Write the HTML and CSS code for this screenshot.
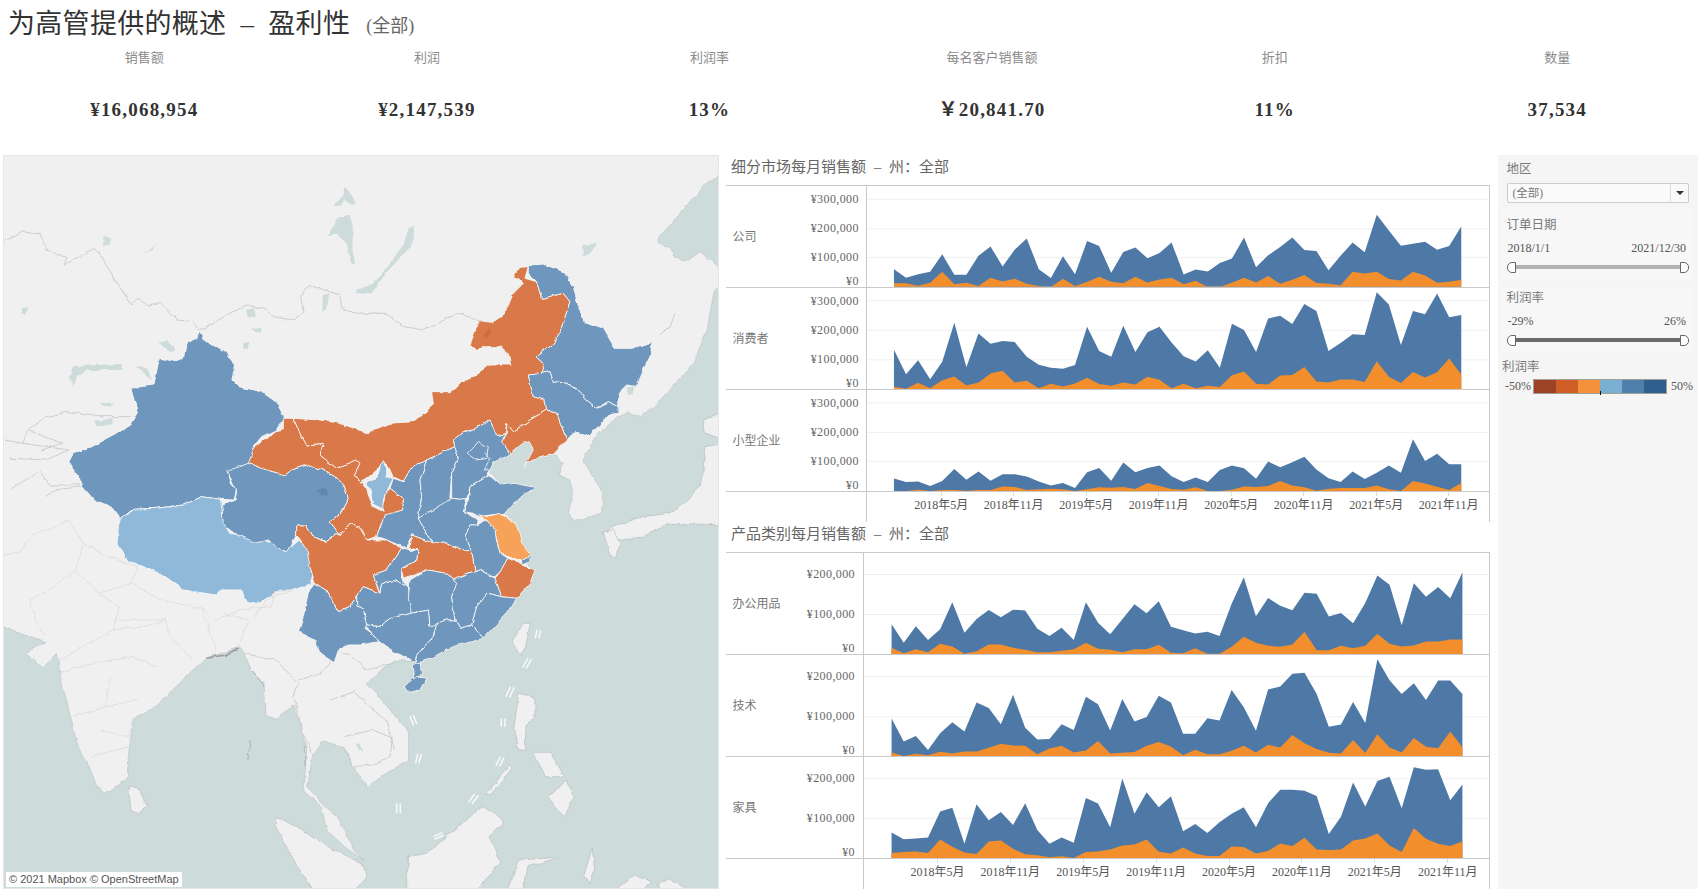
FILE: index.html
```html
<!DOCTYPE html>
<html lang="zh-CN">
<head>
<meta charset="utf-8">
<title>为高管提供的概述 - 盈利性</title>
<link rel="stylesheet" href="styles.css">
</head>
<body>
<div class="page">
  <header class="title-bar"><h1 class="title">为高管提供的概述 – 盈利性<span class="title-sub">(全部)</span></h1></header>
  <section class="kpis">
    <div class="kpi"><div class="kpi-label">销售额</div><div class="kpi-value">¥16,068,954</div></div>
    <div class="kpi"><div class="kpi-label">利润</div><div class="kpi-value">¥2,147,539</div></div>
    <div class="kpi"><div class="kpi-label">利润率</div><div class="kpi-value">13%</div></div>
    <div class="kpi"><div class="kpi-label">每名客户销售额</div><div class="kpi-value">￥20,841.70</div></div>
    <div class="kpi"><div class="kpi-label">折扣</div><div class="kpi-value">11%</div></div>
    <div class="kpi"><div class="kpi-label">数量</div><div class="kpi-value">37,534</div></div>
  </section>
  <main class="main">
    <div class="map">
      <svg class="map-svg" viewBox="4 156 714 732" preserveAspectRatio="none">
        <defs>
          <filter id="rough" filterUnits="userSpaceOnUse" x="0" y="150" width="726" height="746" color-interpolation-filters="sRGB">
            <feTurbulence type="fractalNoise" baseFrequency=".1" numOctaves="3" seed="7" result="noise"/>
            <feDisplacementMap in="SourceGraphic" in2="noise" scale="4" xChannelSelector="R" yChannelSelector="G"/>
          </filter>
        </defs>
        <g filter="url(#rough)">
        <g transform="translate(0 150) scale(.4591 .3333)">
          <polygon class="sea" points="1580,60 1540,100 1500,160 1470,210 1435,262 1432,280 1462,295 1468,325 1500,330 1525,305 1566,352 1580,352"/>
          <polygon class="sea" points="1580,400 1556,420 1540,540 1510,640 1459,720 1423,770 1394,800 1365,785 1343,800 1299,860 1270,930 1314,1030 1310,1090 1285,1100 1249,1115 1238,1090 1249,1030 1241,990 1216,975 1227,940 1209,915 1176,920 1147,940 1140,955 1161,900 1154,875 1136,880 1111,910 1074,940 1067,960 1093,1005 1118,1000 1165,1012 1118,1060 1100,1090 1121,1120 1140,1180 1154,1210 1143,1235 1165,1260 1154,1300 1125,1345 1103,1390 1053,1465 987,1490 915,1540 904,1560 900,1535 860,1530 830,1560 800,1600 850,1680 890,1750 890,1830 830,1880 800,1915 770,1850 750,1790 720,1780 700,1775 680,1820 670,1910 700,1960 735,2000 770,2100 790,2130 750,2090 712,2040 700,1970 662,1925 668,1800 655,1730 640,1665 605,1705 580,1700 575,1600 545,1560 525,1490 450,1525 420,1560 340,1670 290,1710 280,1810 280,1880 240,1925 220,1925 170,1790 130,1570 125,1510 95,1555 55,1510 100,1475 45,1450 10,1430 0,1430 0,2240 1580,2240"/>
          <polygon class="land" points="1530,810 1580,785 1580,870 1535,850"/>
          <polygon class="land" points="1345,1125 1400,1100 1460,1090 1500,1050 1530,990 1535,890 1580,880 1580,1125 1455,1120 1430,1140 1395,1165 1345,1170 1310,1150"/>
          <polygon class="land" points="1314,1145 1336,1140 1350,1180 1343,1225 1328,1215"/>
          <polygon class="lake" points="905,228 895,290 840,370 810,430 775,430 778,420 815,400 850,340 880,280 890,235"/>
          <polygon class="lake" points="750,115 770,140 775,165 750,150 745,170 725,170 745,140"/>
          <polygon class="lake" points="735,200 762,195 770,250 765,290 775,345 765,340 755,280 735,255 715,255 730,225"/>
          <polygon class="lake" points="150,680 160,648 265,642 265,660 190,660 165,680 160,712"/>
          <polygon class="lake" points="295,645 322,655 330,690 310,665"/>
          <polygon class="lake" points="345,580 365,570 385,600 370,605"/>
          <polygon class="lake" points="205,815 245,805 245,822 210,828"/>
          <polygon class="lake" points="220,758 245,760 240,768 225,768"/>
          <polygon class="lake" points="535,480 555,475 557,500 540,505"/>
          <polygon class="lake" points="703,435 717,430 712,475 702,485"/>
          <polygon class="lake" points="548,532 570,535 568,548 555,545"/>
          <polygon class="lake" points="530,580 543,575 540,598 530,600"/>
          <polygon class="lake" points="225,262 242,265 238,288 225,285"/>
          <polygon class="lake" points="310,315 350,275 330,300"/>
          <polygon class="lake" points="1268,285 1302,280 1285,310 1270,325"/>
          <polygon class="lake" points="1365,712 1382,708 1378,735 1368,732"/>
          <polygon class="lake" points="48,475 62,472 55,495 47,492"/>
          <polyline class="border" points="8,275 50,245 90,255 100,300 145,320 140,345 205,295 220,320 285,465 300,445 320,465 350,458 385,510 420,515 432,540 445,535 500,490 540,465 580,480 590,500 640,510 660,485 655,440 675,405 740,435 745,480 790,490 840,490 880,530 920,540 1000,490 1050,515"/>
          <polyline class="border" points="8,870 50,880 60,840 100,800 150,785 210,800 285,800"/>
          <polyline class="border" points="20,925 100,930 150,900 50,880"/>
          <polyline class="border" points="25,1015 85,965 110,1005 175,1005"/>
          <polyline class="border" points="100,1040 120,1020 175,1010"/>
          <polyline class="border" points="60,840 135,880 90,900"/>
          <polyline class="border" points="1470,490 1460,530 1440,558"/>
          <polygon class="blue" points="432,543 445,570 470,590 495,605 510,650 505,690 520,710 570,725 600,755 622,805 612,820 600,840 570,860 555,885 545,940 495,968 505,1000 515,1015 510,1050 480,1048 440,1040 400,1065 340,1075 290,1078 262,1108 245,1075 205,1050 180,1010 170,975 150,935 160,910 200,890 255,850 285,825 300,790 285,715 335,705 347,625 385,635 400,620 405,580 430,565"/>
          <polygon class="pale" points="262,1108 290,1078 340,1075 400,1065 440,1040 480,1048 488,1110 500,1150 600,1180 620,1205 650,1170 675,1200 680,1300 640,1320 610,1320 570,1355 540,1360 525,1320 480,1320 470,1335 400,1320 360,1280 310,1245 280,1235 255,1180 258,1130"/>
          <polygon class="blue" points="880,1610 905,1580 928,1585 915,1620 895,1630"/>
          <polygon class="blue" points="903,1590 900,1540 915,1535 918,1575"/>
          <polygon class="land" points="1115,1475 1140,1420 1155,1420 1145,1490 1133,1518"/>
        </g>
        <g transform="translate(0 520) scale(.4591 .3333)">
          <polyline class="border thin" points="8,105 45,95 70,45 105,30 150,0 180,70 235,110 300,140 285,190 350,240 440,265 470,300 520,270 590,260 600,215 640,210"/>
          <polyline class="border thin" points="180,75 165,150 100,215 65,240 80,310 95,345"/>
          <polyline class="border thin" points="165,150 215,220 260,260 245,330 130,420"/>
          <polyline class="border thin" points="215,220 285,190"/>
          <polyline class="border thin" points="260,300 360,300 370,350 420,420"/>
          <polyline class="border thin" points="245,330 320,320 360,300"/>
          <polyline class="border thin" points="130,460 200,430 290,410 340,440"/>
          <polyline class="border thin" points="240,470 230,560 160,590"/>
          <polyline class="border thin" points="230,560 300,540"/>
          <polyline class="border thin" points="220,630 280,650 290,600"/>
          <polyline class="border thin" points="200,710 280,680"/>
          <polyline class="border thin" points="440,265 470,390"/>
          <polyline class="border thin" points="490,280 540,300 520,380"/>
          <polyline class="border thin" points="555,290 580,240 640,210"/>
          <polyline class="border" points="530,400 600,420 650,490 640,530 660,640 680,700"/>
          <polyline class="border" points="650,480 700,460 735,395 760,400 800,450 860,425"/>
          <polyline class="border" points="720,540 770,515 840,600 860,690"/>
          <polyline class="border" points="750,650 810,630 855,650 850,710 810,735 770,740 750,680"/>
          <polyline class="coast" points="450,415 490,405 520,385"/>
          <polyline class="coast thin-coast" points="550,455 575,500"/>
          <polyline class="coast thin-coast" points="545,660 540,720"/>
          <polyline class="coast thin-coast" points="662,680 665,740"/>
          <polygon class="lake" points="775,670 785,672 792,692 780,688"/>
          <polygon class="land" points="280,800 305,810 320,860 300,882 285,870"/>
          <polygon class="land" points="600,890 660,930 720,985 790,1030 800,1070 770,1110 680,1110 640,1020 600,920"/>
          <polygon class="land" points="885,1110 890,1010 930,1000 990,930 1050,860 1100,905 1065,950 1090,1025 1040,1110"/>
          <polygon class="land" points="1105,1110 1130,1020 1220,1012 1150,1040 1140,1110"/>
          <polygon class="land" points="1340,1110 1380,1065 1420,1085 1400,1110"/>
          <polygon class="land" points="1430,1090 1455,1075 1500,1110 1440,1110"/>
          <polygon class="land" points="1120,620 1130,520 1165,530 1165,590 1145,620 1145,690 1130,690"/>
          <polygon class="land" points="1195,830 1235,780 1250,830 1230,890 1205,860"/>
          <polygon class="land" points="1160,700 1200,700 1230,770 1190,770"/>
          <polygon class="land" points="1060,820 1110,735 1115,745 1070,825"/>
          <polygon class="land" points="1272,1065 1290,985 1295,1050 1285,1090"/>
        </g>
        <g transform="translate(220 250) scale(.3333)">
          <polygon class="blue" points="20,665 85,640 140,660 195,675 215,660 260,645 310,660 370,700 385,745 360,790 330,815 360,855 345,855 320,875 275,860 255,825 230,825 230,855 200,905 175,895 145,870 110,878 50,855 10,825 5,765 45,750 50,720 35,690"/>
          <polygon class="orange" points="190,505 220,505 240,550 260,585 310,580 300,615 350,655 410,630 420,640 400,680 430,700 460,770 490,785 495,790 470,860 440,870 420,835 390,820 360,855 330,815 360,790 385,745 370,700 310,660 260,645 215,660 195,675 140,660 85,640 105,590 165,545 190,540"/>
          <polygon class="orange" points="900,52 925,50 915,85 950,95 965,145 1030,130 1050,155 1025,235 1000,280 948,320 975,345 965,370 925,375 940,440 975,450 980,480 930,510 880,545 860,520 855,555 830,560 810,510 760,540 730,545 700,570 705,590 620,630 570,660 550,695 520,680 500,640 480,650 425,695 400,680 420,640 410,630 350,655 300,615 310,580 260,585 240,550 220,505 300,510 360,520 440,548 510,520 580,515 640,465 635,425 690,425 730,395 770,375 810,345 875,345 870,320 840,290 800,290 770,298 750,285 775,215 815,220 855,190 880,130 910,100 895,85 880,80"/>
          <polygon class="blue" points="925,45 975,42 1030,65 1060,110 1075,170 1095,215 1150,235 1185,295 1240,295 1298,275 1290,320 1275,350 1250,410 1220,405 1195,430 1197,470 1165,455 1130,475 1100,450 1080,425 1040,400 1000,395 990,365 965,370 975,345 948,320 1000,280 1025,235 1050,155 1030,130 965,145 950,95 925,70"/>
          <polygon class="blue" points="925,375 965,370 990,365 1000,395 1040,400 1080,425 1100,450 1130,475 1165,455 1197,470 1197,490 1165,495 1130,535 1105,555 1065,545 1040,570 1010,490 980,480 975,450 940,440"/>
          <polygon class="orange" points="980,480 1010,490 1040,570 1000,610 960,620 920,640 910,655 940,600 930,575 905,580 870,610 845,575 860,550 860,520 880,545 930,510"/>
          <polygon class="pale" points="490,632 500,650 500,680 520,685 490,745 490,780 460,760 455,720 435,703 470,680"/>
          <polygon class="blue" points="620,630 600,690 605,740 595,805 620,850 640,880 575,855 560,895 500,870 470,860 495,790 548,780 550,745 510,715 520,685 550,695 570,660"/>
          <polygon class="orange" points="510,715 550,745 548,780 495,795 488,770 495,735"/>
          <polygon class="blue" points="705,590 715,625 695,670 690,740 695,765 595,805 605,740 600,690 620,630"/>
          <polygon class="blue" points="700,570 730,545 760,540 810,510 830,560 855,555 845,575 870,610 820,640 810,660 800,680 750,710 740,750 695,745 695,670 715,625 705,590"/>
          <polygon class="blue" points="810,675 845,705 880,700 945,712 880,760 855,790 775,800 760,790 730,785 745,750 750,710"/>
          <polygon class="blue" points="695,745 740,750 730,785 775,810 770,825 750,825 735,860 755,905 740,905 680,880 640,880 620,850 595,805"/>
          <polygon class="amber" points="775,795 800,800 840,790 885,820 910,880 930,915 905,930 880,925 840,910 830,870 825,840 800,810"/>
          <polygon class="blue" points="750,825 770,825 800,810 825,840 830,870 840,910 865,925 845,960 825,980 780,960 765,965 755,905 735,860"/>
          <polygon class="blue" points="905,930 930,915 930,935 905,945"/>
          <polygon class="orange" points="865,925 905,945 945,960 930,1000 890,1045 845,1040 825,985 845,960"/>
          <polygon class="orange" points="575,855 640,880 680,880 740,905 755,905 765,965 700,990 680,970 620,960 575,975 550,985 545,955 590,930 595,900 570,895"/>
          <polygon class="orange" points="230,825 255,825 275,860 320,875 345,855 360,855 390,820 420,835 440,870 500,870 545,895 520,930 500,960 460,975 480,1030 430,1010 410,1040 385,1075 355,1085 320,1020 285,1000 270,950 260,895 230,855"/>
          <polygon class="blue" points="545,895 575,905 595,900 590,930 545,955 545,985 565,1010 525,990 485,1005 480,1030 460,975 500,960 520,930"/>
          <polygon class="blue" points="410,1040 430,1010 480,1030 485,1005 525,990 565,1010 570,1045 575,1090 510,1105 480,1130 440,1125 430,1080 410,1065"/>
          <polygon class="blue" points="570,990 620,960 680,970 700,990 710,1000 695,1040 705,1110 680,1110 630,1130 625,1080 575,1090 565,1045"/>
          <polygon class="blue" points="700,990 765,965 780,960 825,985 845,1040 800,1030 770,1070 755,1125 720,1135 705,1110 695,1040 710,1000"/>
          <polygon class="blue" points="845,1040 890,1045 860,1090 790,1165 755,1125 770,1070 800,1030"/>
          <polygon class="blue" points="650,1120 680,1110 705,1110 720,1135 755,1125 790,1165 700,1190 600,1240 585,1240 590,1215 640,1160"/>
          <polygon class="blue" points="440,1125 480,1130 510,1105 575,1090 625,1080 630,1130 650,1120 640,1160 590,1215 585,1235 530,1210 475,1175 470,1160 435,1130"/>
          <polygon class="blue" points="355,1085 385,1075 410,1040 410,1065 430,1080 440,1125 435,1135 470,1160 475,1175 420,1185 380,1185 360,1195 345,1240 300,1210 285,1170 235,1145 250,1100 265,1025 285,1000 320,1020"/>
          <polyline class="inner" points="745,610 775,575 805,590 800,625 770,630 745,610"/>
          <polyline class="inner" points="790,605 810,625 790,660 810,660"/>
          <polygon class="dark-blue" points="292,722 310,712 325,732 305,738"/>
          <polygon class="dark-orange" points="790,255 805,235 815,240 798,265"/>
        </g>
        </g>
        <g class="dashes" transform="translate(0 520) scale(.4591 .3333)">
          <path d="M1166 355 1170 330M1174 355 1178 330M1138 443 1150 415M1146 445 1158 417M1102 530 1112 500M1110 532 1120 502M1092 620 1092 595M1100 620 1100 595M1080 738 1090 710M1088 740 1098 712M1020 848 1034 822M1028 852 1042 826M944 950 964 938M946 958 966 946M864 880 864 850M872 880 872 850M905 730 910 702M912 730 918 702M893 588 901 617M900 585 908 612"/>
        </g>
      </svg>
      <div class="attribution">© 2021 Mapbox © OpenStreetMap</div>
    </div>

    <div class="trends">
      <section class="trend trend-a">
        <h2 class="trend-title">细分市场每月销售额 – 州：全部</h2>
        <div class="rows">
          <div class="row">
            <div class="side"><span class="row-label">公司</span><div class="ticks"><span>¥300,000</span><span>¥200,000</span><span>¥100,000</span><span class="tick-zero">¥0</span></div></div>
            <div class="plot"><svg viewBox="-2.234 105 51.5 306" preserveAspectRatio="none">
              <path class="grid" d="M-3 145H50M-3 235H50M-3 322H50"/>
              <polygon class="area-blue" points="0,410 0,357 1,383 2,372 3,365 4,312 5,374 6,374 7,316 8,288 9,349 10,298 11,264 12,357 13,384 14,318 15,372 16,272 17,287 18,368 19,305 20,291 21,324 22,308 23,276 24,373 25,358 26,364 27,338 28,325 29,261 30,351 31,315 32,290 33,261 34,299 35,302 36,360 37,316 38,276 39,306 40,192 41,240 42,286 43,280 44,274 45,298 46,287 47,228 47,410"/>
              <polygon class="area-orange" points="0,410 0,400 1,400 2,407 3,398 4,365 5,403 6,398 7,408 8,383 9,394 10,386 11,401 12,408 13,411 14,386 15,408 16,396 17,380 18,395 19,400 20,380 21,397 22,388 23,383 24,403 25,392 26,411 27,411 28,398 29,383 30,397 31,378 32,401 33,389 34,375 35,399 36,401 37,406 38,365 39,370 40,365 41,387 42,391 43,365 44,376 45,398 46,395 47,389 47,410"/>
            </svg></div>
          </div>
          <div class="row">
            <div class="side"><span class="row-label">消费者</span><div class="ticks"><span>¥300,000</span><span>¥200,000</span><span>¥100,000</span><span class="tick-zero">¥0</span></div></div>
            <div class="plot"><svg viewBox="-2.234 412 51.5 308" preserveAspectRatio="none">
              <path class="grid" d="M-3 451H50M-3 541H50M-3 631H50"/>
              <polygon class="area-blue" points="0,720 0,600 1,675 2,632 3,690 4,637 5,518 6,654 7,551 8,582 9,574 10,577 11,622 12,646 13,655 14,658 15,647 16,530 17,604 18,622 19,527 20,607 21,547 22,530 23,578 24,620 25,636 26,602 27,655 28,521 29,540 30,607 31,505 32,497 33,522 34,461 35,482 36,604 37,580 38,553 39,555 40,425 41,462 42,586 43,482 44,492 45,429 46,501 47,494 47,720"/>
              <polygon class="area-orange" points="0,720 0,713 1,719 2,701 3,718 4,693 5,682 6,709 7,700 8,673 9,664 10,700 11,695 12,718 13,704 14,712 15,703 16,686 17,705 18,710 19,700 20,706 21,683 22,692 23,718 24,704 25,718 26,710 27,714 28,678 29,667 30,704 31,706 32,679 33,677 34,653 35,697 36,700 37,691 38,691 39,699 40,635 41,683 42,702 43,668 44,685 45,669 46,627 47,676 47,720"/>
            </svg></div>
          </div>
          <div class="row">
            <div class="side"><span class="row-label">小型企业</span><div class="ticks"><span>¥300,000</span><span>¥200,000</span><span>¥100,000</span><span class="tick-zero">¥0</span></div></div>
            <div class="plot"><svg viewBox="-2.234 721 51.5 306" preserveAspectRatio="none">
              <path class="grid" d="M-3 760H50M-3 850H50M-3 937H50"/>
              <polygon class="area-blue" points="0,1027 0,989 1,1000 2,998 3,1012 4,997 5,960 6,993 7,968 8,996 9,976 10,976 11,983 12,998 13,1010 14,1003 15,1018 16,970 17,957 18,996 19,941 20,970 21,957 22,950 23,982 24,1000 25,986 26,1000 27,963 28,950 29,958 30,990 31,938 32,955 33,940 34,923 35,962 36,988 37,1000 38,968 39,991 40,972 41,950 42,972 43,870 44,936 45,914 46,946 47,946 47,1027"/>
              <polygon class="area-orange" points="0,1027 1,1027 2,1023 3,1027 4,1024 5,1024 6,1026 7,1024 8,1024 9,1013 10,1015 11,1024 12,1022 13,1020 14,1022 15,1027 16,1022 17,1016 18,1017 19,1015 20,1021 21,1003 22,1012 23,1021 24,1023 25,1016 26,1027 27,1027 28,1023 29,1013 30,1015 31,1012 32,997 33,1010 34,1016 35,1026 36,1020 37,1018 38,1018 39,1018 40,1010 41,1022 42,1027 43,997 44,1004 45,1014 46,1024 47,1003 47,1027"/>
            </svg></div>
          </div>
        </div>
        <div class="x-axis"><div class="x-labels"><span>2018年5月</span><span>2018年11月</span><span>2019年5月</span><span>2019年11月</span><span>2020年5月</span><span>2020年11月</span><span>2021年5月</span><span>2021年11月</span></div></div>
      </section>

      <section class="trend trend-b">
        <h2 class="trend-title">产品类别每月销售额 – 州：全部</h2>
        <div class="rows">
          <div class="row">
            <div class="side"><span class="row-label">办公用品</span><div class="ticks"><span>¥200,000</span><span>¥100,000</span><span class="tick-zero">¥0</span></div></div>
            <div class="plot"><svg viewBox="-2.27 97 51.5 305" preserveAspectRatio="none">
              <path class="grid" d="M-3 162H50M-3 283H50"/>
              <polygon class="area-blue" points="0,402 0,312 1,368 2,318 3,360 4,327 5,246 6,338 7,296 8,269 9,291 10,268 11,271 12,326 13,348 14,323 15,360 16,246 17,308 18,342 19,297 20,252 21,279 22,243 23,320 24,330 25,340 26,335 27,348 28,250 29,170 30,288 31,233 32,256 33,270 34,217 35,220 36,289 37,278 38,309 39,248 40,165 41,193 42,315 43,188 44,229 45,200 46,234 47,155 47,402"/>
              <polygon class="area-orange" points="0,402 0,383 1,400 2,388 3,397 4,371 5,379 6,401 7,394 8,373 9,373 10,383 11,389 12,397 13,397 14,392 15,388 16,368 17,386 18,389 19,397 20,388 21,388 22,374 23,398 24,400 25,385 26,401 27,401 28,380 29,350 30,368 31,377 32,380 33,373 34,335 35,391 36,391 37,377 38,385 39,377 40,341 41,371 42,379 43,376 44,364 45,364 46,358 47,358 47,402"/>
            </svg></div>
          </div>
          <div class="row">
            <div class="side"><span class="row-label">技术</span><div class="ticks"><span>¥200,000</span><span>¥100,000</span><span class="tick-zero">¥0</span></div></div>
            <div class="plot"><svg viewBox="-2.27 403 51.5 308" preserveAspectRatio="none">
              <path class="grid" d="M-3 469H50M-3 592H50"/>
              <polygon class="area-blue" points="0,711 0,597 1,667 2,650 3,693 4,642 5,608 6,636 7,548 8,565 9,614 10,524 11,625 12,661 13,659 14,614 15,632 16,530 17,553 18,633 19,537 20,606 21,592 22,527 23,548 24,643 25,643 26,596 27,603 28,510 29,562 30,634 31,508 32,499 33,460 34,457 35,522 36,622 37,615 38,546 39,610 40,416 41,480 42,522 43,489 44,540 45,481 46,481 47,522 47,711"/>
              <polygon class="area-orange" points="0,711 0,700 1,711 2,704 3,709 4,698 5,703 6,697 7,697 8,686 9,674 10,679 11,680 12,706 13,688 14,680 15,700 16,694 17,665 18,703 19,701 20,699 21,680 22,668 23,682 24,709 25,692 26,706 27,706 28,695 29,680 30,700 31,677 32,685 33,647 34,672 35,690 36,701 37,703 38,662 39,702 40,645 41,685 42,700 43,656 44,683 45,687 46,636 47,684 47,711"/>
            </svg></div>
          </div>
          <div class="row">
            <div class="side"><span class="row-label">家具</span><div class="ticks"><span>¥200,000</span><span>¥100,000</span><span class="tick-zero">¥0</span></div></div>
            <div class="plot"><svg viewBox="-2.27 712 51.5 306" preserveAspectRatio="none">
              <path class="grid" d="M-3 778H50M-3 898H50"/>
              <polygon class="area-blue" points="0,1018 0,941 1,961 2,959 3,956 4,877 5,866 6,975 7,855 8,904 9,879 10,918 11,852 12,933 13,975 14,956 15,972 16,836 17,853 18,925 19,777 20,884 21,819 22,864 23,831 24,937 25,915 26,942 27,910 28,884 29,864 30,925 31,852 32,811 33,811 34,814 35,830 36,945 37,893 38,789 39,862 40,785 41,772 42,867 43,743 44,751 45,749 46,843 47,795 47,1018"/>
              <polygon class="area-orange" points="0,1018 0,1003 1,1000 2,998 3,1003 4,962 5,984 6,1001 7,1006 8,968 9,965 10,990 11,1007 12,1010 13,1016 14,1013 15,1018 16,1000 17,998 18,992 19,980 20,977 21,962 22,999 23,1004 24,986 25,1004 26,1012 27,1012 28,983 29,985 30,1004 31,997 32,974 33,982 34,957 35,992 36,994 37,992 38,965 39,959 40,944 41,980 42,1000 43,927 44,960 45,975 46,982 47,968 47,1018"/>
            </svg></div>
          </div>
        </div>
        <div class="x-axis"><div class="x-labels"><span>2018年5月</span><span>2018年11月</span><span>2019年5月</span><span>2019年11月</span><span>2020年5月</span><span>2020年11月</span><span>2021年5月</span><span>2021年11月</span></div></div>
      </section>
    </div>

    <aside class="filters">
      <div class="filter filter-region">
        <div class="filter-label">地区</div>
        <div class="select"><span class="select-text">(全部)</span><span class="select-caret"><i class="caret"></i></span></div>
      </div>
      <div class="filter filter-date">
        <div class="filter-label">订单日期</div>
        <div class="range-values"><span>2018/1/1</span><span>2021/12/30</span></div>
        <div class="slider"><i class="knob knob-l"></i><i class="track"></i><i class="knob knob-r"></i></div>
      </div>
      <div class="filter filter-margin">
        <div class="filter-label">利润率</div>
        <div class="range-values"><span>-29%</span><span>26%</span></div>
        <div class="slider slider-dark"><i class="knob knob-l"></i><i class="track"></i><i class="knob knob-r"></i></div>
      </div>
      <div class="legend">
        <div class="filter-label">利润率</div>
        <div class="legend-row">
          <span class="legend-end">-50%</span>
          <div class="legend-bar"><i class="c1"></i><i class="c2"></i><i class="c3"></i><i class="c4"></i><i class="c5"></i><i class="c6"></i><b class="legend-tick"></b></div>
          <span class="legend-end legend-end-r">50%</span>
        </div>
      </div>
    </aside>
  </main>
</div>
</body>
</html>
```
FILE: styles.css
```css
* { box-sizing: border-box; }
html, body { margin: 0; padding: 0; background: #fff; }
body { font-family: "Liberation Serif", "Noto Sans CJK SC", serif; color: #555; }
.page { width: 1699px; height: 896px; overflow: hidden; }

.title-bar { height: 46px; padding: 0 0 3px 8px; display: flex; align-items: center; }
.title { margin: 0; font-size: 27px; font-weight: 400; color: #333; letter-spacing: .3px; word-spacing: 7px; white-space: nowrap; }
.title-sub { font-size: 18px; margin-left: 16px; color: #666; letter-spacing: 0; vertical-align: 1px; }

.kpis { height: 109px; padding-left: 3px; display: grid; grid-template-columns: repeat(6, 282.6px); }
.kpi { display: flex; flex-direction: column; align-items: center; }
.kpi-label { margin-top: 3px; height: 18px; line-height: 18px; font-size: 13px; color: #8a8a8a; }
.kpi-value { margin-top: 28.5px; height: 28px; line-height: 28px; font-size: 19px; font-weight: 700; color: #333; letter-spacing: 1.2px; }

.main { height: 734px; padding-left: 3px; display: grid; grid-template-columns: 716px 764px 201px; column-gap: 7px; }
.main > .filters { margin-left: 1px; }

.map { position: relative; height: 734px; border: 1px solid #e6e6e6; background: #f0f0f0; overflow: hidden; }
.map-svg { display: block; width: 100%; height: 100%; }
.sea { fill: #cddbda; stroke: #bfc6c6; stroke-width: .7; vector-effect: non-scaling-stroke; }
.land { fill: #f0f0f0; stroke: #b9bdbd; stroke-width: .7; vector-effect: non-scaling-stroke; }
.lake { fill: #cddbda; }
.border { fill: none; stroke: #c4c4c4; stroke-width: .8; vector-effect: non-scaling-stroke; }
.border.thin { stroke: #dadada; }
.coast { fill: none; stroke: #9c9c9c; stroke-width: 1.6; vector-effect: non-scaling-stroke; }
.coast.thin-coast { stroke: #b0b0b0; stroke-width: 1; }
.dashes path { fill: none; stroke: #f8f8f8; stroke-width: 1.6; vector-effect: non-scaling-stroke; }
.blue, .orange, .pale, .amber { stroke: #f7f7f7; stroke-width: .9; stroke-linejoin: round; vector-effect: non-scaling-stroke; }
.blue { fill: #6f96bc; }
.orange { fill: #d97848; }
.pale { fill: #8fb8d9; }
.amber { fill: #f6a259; }
.inner { fill: none; stroke: #f7f7f7; stroke-width: .9; vector-effect: non-scaling-stroke; }
.dark-blue { fill: #6089b1; }
.dark-orange { fill: #c96c40; }
.attribution { position: absolute; left: 2px; bottom: 1px; height: 15px; padding: 0 3px; background: #fff; font: 11px/15px "Liberation Sans", sans-serif; color: #555; white-space: nowrap; }

.trends { display: flex; flex-direction: column; }
.trend { height: 367px; display: flex; flex-direction: column; }
.trend-a { --axis: 140.4px; --first: 37.5px; --step: 72.5px; --tick-pad: -1.5px; --tick-step: 29.4px; }
.trend-b { --axis: 136.5px; --first: 37.5px; --step: 72.9px; --tick-pad: .5px; --tick-step: 40px; }
.trend-title { margin: 0; height: 30px; padding: 0 0 9px 5px; display: flex; align-items: center; font-size: 15px; font-weight: 400; color: #666; white-space: pre; word-spacing: 4px; }
.rows { height: 307px; display: grid; grid-template-rows: repeat(3, 1fr); border-top: 1px solid #c9c9c9; border-right: 1px solid #c9c9c9; }
.row { display: grid; grid-template-columns: var(--axis) 1fr; border-bottom: 1px solid #c9c9c9; min-height: 0; }
.side { display: flex; justify-content: space-between; align-items: stretch; padding: 0 7.5px 0 6.5px; min-height: 0; }
.row-label { align-self: center; margin-bottom: 2px; font-size: 12px; color: #777; }
.ticks { display: flex; flex-direction: column; align-items: flex-end; margin-top: var(--tick-pad); font-size: 12px; letter-spacing: .4px; color: #666; }
.ticks span { height: var(--tick-step); line-height: var(--tick-step); flex: none; }
.ticks .tick-zero { margin-top: -6px; }
.plot { border-left: 1px solid #c9c9c9; min-width: 0; min-height: 0; }
.plot svg { display: block; width: 100%; height: 100%; }
.grid { fill: none; stroke: #f0f0f0; stroke-width: 1; vector-effect: non-scaling-stroke; }
.area-blue { fill: #4e79a7; }
.area-orange { fill: #f28e2b; }
.x-axis { height: 30px; margin-left: var(--axis); border-left: 1px solid #c9c9c9; border-right: 1px solid #c9c9c9; }
.x-labels { display: grid; grid-template-columns: repeat(8, var(--step)); padding-left: var(--first); }
.x-labels span { padding-top: 3px; text-align: center; font-size: 12px; line-height: 20px; color: #555; white-space: nowrap; background: linear-gradient(#ddd, #ddd) center top / 1px 4px no-repeat; }

.filters { height: 734px; background: #f5f5f5; display: flex; flex-direction: column; }
.filter { padding: 0 9px 0 8.5px; }
.filter-label { height: 16px; line-height: 16px; font-size: 12.5px; color: #7a7a7a; }
.filter-region { height: 53px; padding-top: 6px; }
.select { margin-top: 6px; height: 20px; border: 1px solid #cdcdcd; border-radius: 2px; background: #fafafa; display: flex; }
.select-text { flex: 1; padding-left: 5px; font-size: 11.5px; line-height: 18px; color: #777; }
.select-caret { width: 18px; border-left: 1px solid #ddd; display: flex; align-items: center; justify-content: center; }
.caret { width: 0; height: 0; border-left: 4px solid transparent; border-right: 4px solid transparent; border-top: 4px solid #333; }
.filter-date { height: 72px; padding-top: 9px; background: #f7f7f7; margin: 0 4px; padding-left: 4.5px; padding-right: 5px; }
.filter-margin { height: 64px; margin: 8px 4px 0; padding: 2px 5px 0 4.5px; background: #f7f7f7; }
.range-values { margin-top: 8px; height: 14px; display: flex; justify-content: space-between; padding: 0 3px 0 1px; font-size: 12px; line-height: 14px; color: #555; }
.slider { margin-top: 6px; height: 12px; display: flex; align-items: center; }
.track { flex: 1; height: 4px; background: #b2b2b2; }
.slider-dark .track { background: #6b6b6b; }
.knob { flex: none; width: 9px; height: 11px; background: #fff; border: 1.5px solid #666; }
.knob-l { border-radius: 5px 0 0 5px; }
.knob-r { border-radius: 0 5px 5px 0; }
.legend { margin-top: 7px; padding-left: 4px; }
.legend-row { margin-top: 4px; padding-left: 3px; display: flex; align-items: center; gap: 2px; }
.legend-end { font-size: 12px; line-height: 15px; color: #555; }
.legend-end-r { margin-left: 2px; }
.legend-bar { position: relative; width: 134px; height: 15px; border: 1px solid #a09f96; display: grid; grid-template-columns: repeat(6, 1fr); }
.c1 { background: #9c4227; }
.c2 { background: #d05f27; }
.c3 { background: #f4923b; }
.c4 { background: #7aafd4; }
.c5 { background: #4f80ac; }
.c6 { background: #2f5f8d; }
.legend-tick { position: absolute; left: 66px; bottom: -2px; width: 1px; height: 4px; background: #111; }
```
